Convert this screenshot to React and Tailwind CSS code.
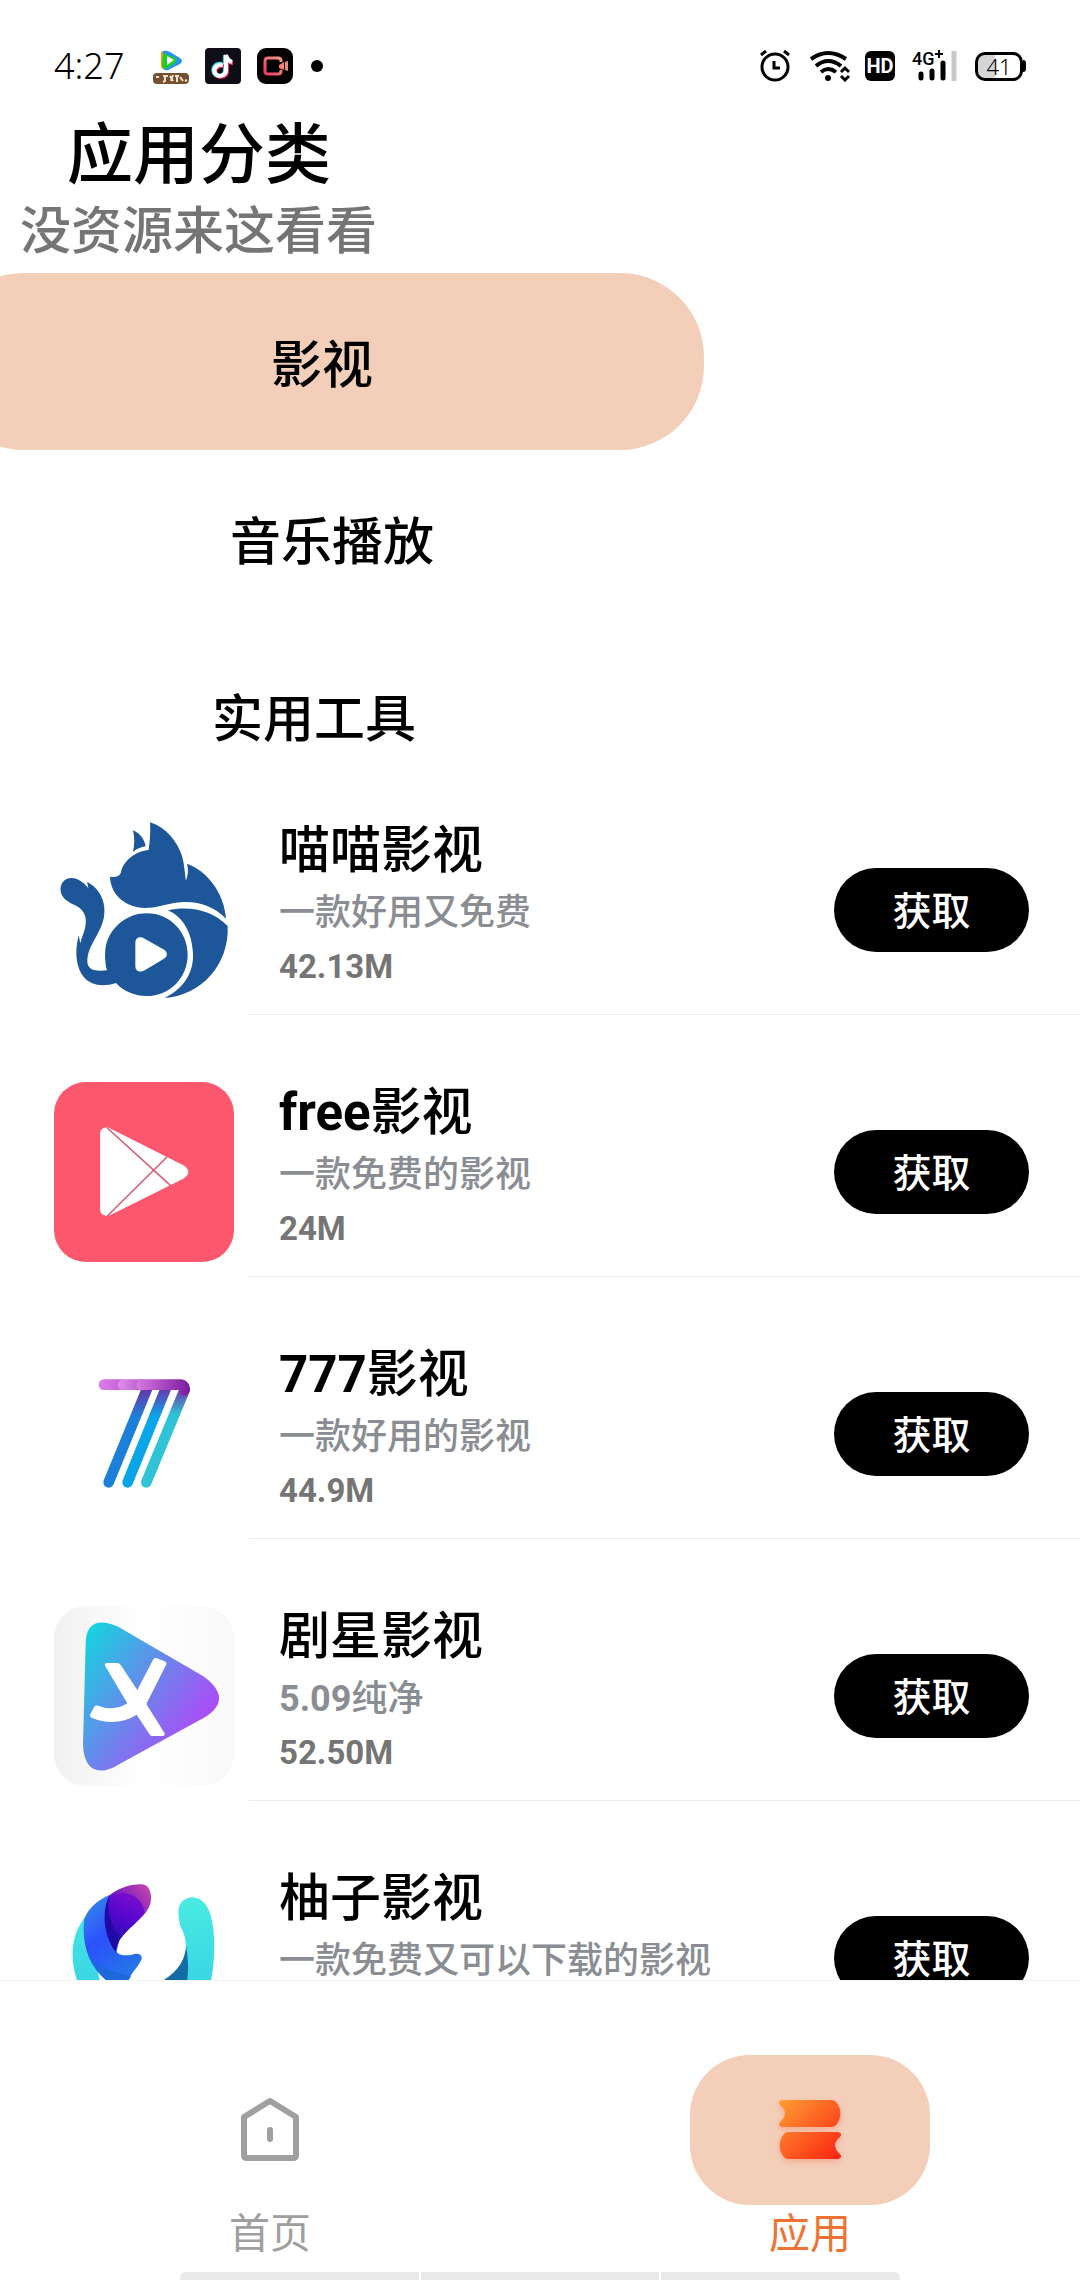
import { useState } from 'react'

const CatIcon = () => (
    <svg viewBox="42 60 540 540" className="size-full" fill="#1d5799">
        <path d="M330 67C378 82 412 124 426 168C434 196 434 220 438 242C444 225 446 208 441 191C500 212 552 276 558 356C520 318 478 304 430 306C384 308 356 324 314 324C258 322 212 286 210 230C226 232 240 230 243 216C250 184 284 154 326 150C330 124 332 96 330 67Z" />
        <path d="M279 91C300 100 314 118 317 139C303 141 290 147 279 156C284 134 284 112 279 91Z" />
        <path d="M384 331C446 316 518 330 563 378C568 492 486 586 374 594C432 566 462 516 459 460C456 402 432 352 384 331Z" />
        <path d="M62 262C66 236 92 228 112 238C126 244 136 254 145 264C144 258 143 252 141 246C176 262 200 304 192 350C184 400 142 436 142 484C142 508 162 516 201 511C194 490 194 452 198 436C212 380 262 340 320 340C390 340 443 396 443 464C443 534 388 588 320 588C284 588 250 574 228 549C160 570 112 540 109 462C109 440 112 424 116 406C118 414 119 422 121 430C128 400 142 382 136 350C128 318 100 318 78 300C66 290 60 278 62 262Z" />
        <path fill="#fff" d="M286 430C286 412 300 408 314 416L370 448C384 456 384 468 372 476L314 511C300 519 286 514 286 498Z" />
    </svg>
)

const FreeIcon = () => (
    <svg viewBox="42 66 540 540" className="size-full bg-[#fd576e]">
        <path fill="#fff" d="M180 225C180 205 192 200 208 204L430 316C450 328 450 344 430 356L210 466C192 470 180 462 180 446Z" />
        <path stroke="#d4607c" strokeWidth="5" fill="none" d="M202 204L392 377M202 468L381 291" />
    </svg>
)

const SevenIcon = () => (
    <svg viewBox="42 13 540 540" className="size-full" fill="none" strokeWidth="32" strokeLinecap="round" strokeLinejoin="round">
        <defs>
            <linearGradient id="barA" gradientUnits="userSpaceOnUse" x1="178" y1="0" x2="250" y2="0">
                <stop offset="0" stopColor="#d97fe8" />
                <stop offset="1" stopColor="#c55fd4" />
            </linearGradient>
            <linearGradient id="barB" gradientUnits="userSpaceOnUse" x1="235" y1="0" x2="310" y2="0">
                <stop offset="0" stopColor="#de90ea" />
                <stop offset="1" stopColor="#b955c8" />
            </linearGradient>
            <linearGradient id="bar" gradientUnits="userSpaceOnUse" x1="290" y1="0" x2="450" y2="0">
                <stop offset="0" stopColor="#d678e0" />
                <stop offset="1" stopColor="#7a1ba0" />
            </linearGradient>
            <linearGradient id="legA" gradientUnits="userSpaceOnUse" x1="0" y1="140" x2="0" y2="230">
                <stop offset="0" stopColor="#6f2da8" />
                <stop offset="1" stopColor="#1d80d8" />
            </linearGradient>
            <linearGradient id="legB" gradientUnits="userSpaceOnUse" x1="0" y1="140" x2="0" y2="230">
                <stop offset="0" stopColor="#6f2da8" />
                <stop offset="1" stopColor="#08a6e8" />
            </linearGradient>
            <linearGradient id="legC" gradientUnits="userSpaceOnUse" x1="0" y1="135" x2="0" y2="225">
                <stop offset="0" stopColor="#7a1ba0" />
                <stop offset="1" stopColor="#30c3d8" />
            </linearGradient>
        </defs>
        <path stroke="url(#legA)" d="M322 145L206 428" />
        <path stroke="url(#legB)" d="M378 145L263 428" />
        <path stroke="url(#legC)" d="M434 150L319 428" />
        <path stroke="none" fill="url(#barA)" d="M192 119H250V151H192A16 16 0 0 1 192 119Z" />
        <path stroke="none" fill="url(#barB)" d="M250 119H310V151H250A16 16 0 0 1 250 119Z" />
        <path stroke="url(#bar)" d="M304 135H420Q436 136 433 152" />
    </svg>
)

const StarIcon = () => (
    <svg viewBox="42 47 540 540" className="size-full bg-linear-to-r from-[#f2f1f0] via-white to-[#f9f9f9]">
        <defs>
            <linearGradient id="play" gradientUnits="userSpaceOnUse" x1="130" y1="150" x2="500" y2="400">
                <stop offset="0" stopColor="#17d2e0" />
                <stop offset="0.55" stopColor="#6f82ec" />
                <stop offset="1" stopColor="#ad4bf7" />
            </linearGradient>
        </defs>
        <path fill="url(#play)" d="M137 160C138 100 172 82 232 108L490 258C552 302 552 346 496 380L240 520C180 558 132 546 129 462Z" />
        <path fill="#fff" d="M195 226Q192 218 202 218H232Q238 218 242 224L292 299L339 208Q343 201 351 204L374 213Q382 217 378 224L319 341L373 427Q377 437 366 437H336Q331 437 328 431L290 373C250 398 204 402 156 383Q148 380 151 372L162 351Q166 343 174 346C206 358 236 356 262 339L195 226Z" />
    </svg>
)

const PomeloIcon = () => (
    <svg viewBox="-18 -4 540 540" className="size-full">
        <defs>
            <linearGradient id="tip" x1="0" y1="1" x2="1" y2="0">
                <stop offset="0.3" stopColor="#5b0bd0" />
                <stop offset="1" stopColor="#cc4aa6" />
            </linearGradient>
            <linearGradient id="wave" x1="0" y1="0" x2="0.6" y2="1">
                <stop offset="0" stopColor="#3393e6" />
                <stop offset="0.5" stopColor="#2d50fb" />
                <stop offset="1" stopColor="#2474ea" />
            </linearGradient>
            <linearGradient id="violet" x1="0.3" y1="1" x2="0.7" y2="0">
                <stop offset="0" stopColor="#3309b8" />
                <stop offset="0.5" stopColor="#5a06cf" />
                <stop offset="1" stopColor="#7a10cc" />
            </linearGradient>
            <linearGradient id="aqua" x1="0" y1="0" x2="0" y2="1">
                <stop offset="0" stopColor="#49eae2" />
                <stop offset="1" stopColor="#2fc9e6" />
            </linearGradient>
        </defs>
        <path fill="url(#aqua)" d="M76 142C30 200 30 270 52 336C90 470 230 540 340 490C440 450 462 340 463 220C460 130 440 86 396 84C340 90 356 150 362 172C390 220 384 290 314 336H120Z" />
        <path fill="#146ca6" d="M378 228C376 280 344 312 312 332L300 350H378C388 312 384 262 378 228Z" />
        <path fill="#fff" d="M170 248L300 90L378 228C374 276 350 306 300 334L200 334Z" />
        <path fill="url(#wave)" d="M150 76C110 92 84 120 73 148C64 220 84 290 140 334H204C216 306 238 290 245 268C247 254 232 250 216 256C196 260 176 258 170 247L180 200Z" />
        <path fill="#1d69dc" d="M90 262C130 312 180 306 213 322L204 334H140C118 314 100 290 90 262Z" />
        <path fill="#1f0aa5" d="M150 76C128 110 124 190 167 248C170 226 180 206 196 190Z" />
        <path fill="url(#tip)" d="M150 76C190 48 230 42 252 46C270 50 276 78 272 98C264 140 212 168 184 205Z" />
        <path fill="url(#violet)" d="M148 80C200 60 244 76 254 128C236 154 206 176 184 204C150 170 140 124 148 80Z" />
    </svg>
)

const apps = [
    { id: 1, name: '喵喵影视', desc: '一款好用又免费', size: '42.13M', Icon: CatIcon },
    { id: 2, latin: 'free', name: '影视', desc: '一款免费的影视', size: '24M', Icon: FreeIcon },
    { id: 3, latin: '777', name: '影视', desc: '一款好用的影视', size: '44.9M', Icon: SevenIcon },
    { id: 4, name: '剧星影视', version: '5.09', desc: '纯净', size: '52.50M', Icon: StarIcon },
    { id: 5, name: '柚子影视', desc: '一款免费又可以下载的影视', size: '', Icon: PomeloIcon },
]

const categories = [
    { name: '影视', width: 'w-[764px]' },
    { name: '音乐播放', width: 'w-[784px]' },
    { name: '实用工具', width: 'w-[748px]' },
]

const StatusBar = () => (
    <div className="flex h-[110px] shrink-0 items-center justify-between px-[54px] pt-[22px]">
        <div className="flex items-center">
            <span className="w-[99px] font-['Noto_Sans'] text-[36px] font-light leading-none">4:27</span>
            <div className="flex items-center gap-4">
                <svg viewBox="0 0 36 36" className="size-9">
                    <path fill="#f59a1d" d="M8 5Q8 3 11 3V21Q8 21 8 18Z" />
                    <path fill="#2492ef" d="M10 3Q13 2 17 4L27 10Q31 13 27 16L15 22Q11 23 10 20Z" />
                    <path fill="#20cf1e" d="M10 5L22 10Q25 13 22 15L12 21Q9 20 9 16Z" />
                    <path fill="#fff" d="M14 8L21 12L14 17Z" />
                    <rect y="25" width="36" height="11" rx="4" fill="#77502f" />
                    <path stroke="#f2e4d2" strokeWidth="2" fill="none" d="M3 29h3M10 28h5M12 27v6l-2 1M17 28l3 5M20 27l-2 6M22 28h4M24 27v7M27 29l3 4M32 33l2-1" />
                </svg>
                <svg viewBox="0 0 36 36" className="size-9">
                    <rect width="36" height="36" rx="4" fill="#0f0d18" />
                    <g fill="none" strokeWidth="4">
                        <path stroke="#31e5e4" d="M17 16C10 15 7 20 9 25C12 30 20 28 20 22V7C21 11 23 13 27 14" />
                        <path stroke="#f3315b" d="M19 18C12 17 9 22 11 26C14 31 22 29 22 23V9C23 13 25 15 28 15" />
                        <path stroke="#fff" d="M18 17C11 16 8 21 10 25C13 30 21 28 21 22V7C22 11 24 13 27 14" />
                    </g>
                </svg>
                <svg viewBox="0 0 36 36" className="size-9">
                    <defs>
                        <linearGradient id="rec" x1="0" y1="1" x2="1" y2="0">
                            <stop offset="0" stopColor="#e63c5d" />
                            <stop offset="1" stopColor="#f49a86" />
                        </linearGradient>
                    </defs>
                    <rect width="36" height="36" rx="9" fill="#050203" />
                    <path fill="none" stroke="url(#rec)" strokeWidth="3" d="M24 14V13Q24 10 21 10H11Q8 10 8 13V23Q8 26 11 26H21Q24 26 24 23V22" />
                    <path fill="#f2866f" d="M22 17L27 14V22L22 20ZM28 14L31 13V23L28 22Z" />
                </svg>
                <span className="ml-0.5 size-3 rounded-full bg-black" />
            </div>
        </div>
        <div className="flex items-center">
            <svg viewBox="0 0 30 32" className="h-8 w-[30px]" fill="none" stroke="#000" strokeWidth="3">
                <circle cx="15" cy="17" r="13" />
                <path d="M14 11V18H20M1 5L6 1M24 1L29 5" />
            </svg>
            <svg viewBox="0 0 40 32" className="ml-5 h-8 w-10" fill="none" stroke="#000" strokeWidth="4">
                <path d="M1 9Q18 -3 36 9M6 16Q18 6 31 16M11 22Q18 16 26 22" />
                <circle cx="18" cy="28" r="3" fill="#000" stroke="none" />
                <path strokeWidth="3" d="M31 22L35 18L39 22M31 26L35 30L39 26" />
            </svg>
            <span className="ml-[15px] flex h-[30px] w-[30px] items-center justify-center rounded-md bg-black font-['Roboto'] text-[20px] font-bold leading-none text-white">HD</span>
            <svg viewBox="0 0 46 32" className="ml-[17px] h-8 w-[46px] overflow-visible">
                <text x="0" y="15" className="font-['Roboto'] text-[18px] font-medium">4G</text>
                <path stroke="#000" strokeWidth="2" d="M23 4H31M27 0V8" />
                <path stroke="#000" strokeWidth="5" strokeLinecap="round" d="M9 24V28M20 21V28M31 13V28" />
                <path stroke="#c9c9c9" strokeWidth="5" d="M42 1V31" />
            </svg>
            <div className="ml-[17px] flex items-center">
                <span className="flex h-[29px] w-[48px] items-center justify-center rounded-[10px] border-3 border-black bg-linear-to-r from-[#d6d6d6] from-40% to-white to-40% font-['Noto_Sans'] text-[22px] font-light leading-none">41</span>
                <span className="h-3 w-[3px] rounded-r-full bg-black" />
            </div>
        </div>
    </div>
)

const AppRow = ({ app }) => {
    const { Icon } = app
    return (
        <li className="flex h-[210px] shrink-0 pl-[54px]">
            <div className="mt-[15px] size-[180px] shrink-0 overflow-hidden rounded-[32px]">
                <Icon />
            </div>
            <div className="ml-[15px] flex flex-1 items-center justify-between border-b border-[#ebebeb] pl-[30px] pr-[51px]">
                <div className="whitespace-nowrap pb-[9px]">
                    <h2 className="text-[51px] font-medium leading-[68px]">
                        {app.latin && <span className="font-bold">{app.latin}</span>}
                        {app.name}
                    </h2>
                    <p className="text-[36px] font-medium leading-[56px] text-[#8a8d91]">
                        {app.version && <span className="font-bold">{app.version}</span>}
                        {app.desc}
                    </p>
                    <p className="h-[52px] text-[33px] font-bold leading-[52px] text-[#757575]">{app.size}</p>
                </div>
                <button className="h-[84px] w-[195px] rounded-full bg-black pt-[6px] text-[39px] font-medium text-white">获取</button>
            </div>
        </li>
    )
}

const App = () => {
    const [category, setCategory] = useState('影视')

    return (
        <div className="flex h-screen flex-col overflow-hidden bg-white font-['Roboto','Noto_Sans_CJK_SC',sans-serif] text-black">
            <StatusBar />

            <header className="shrink-0 pt-1">
                <h1 className="pl-[67px] text-[66px] font-medium leading-[84px]">应用分类</h1>
                <p className="pl-[20px] text-[51px] font-medium leading-[68px] text-[#757575]">没资源来这看看</p>
            </header>

            {/* Categories */}
            <div className="-ml-[60px] mt-[7px] flex shrink-0 flex-col items-start">
                {categories.map(c => (
                    <button
                        key={c.name}
                        onClick={() => setCategory(c.name)}
                        className={`h-[177px] rounded-[84px] pt-[10px] text-[51px] font-medium ${c.width} ${category === c.name ? 'bg-[#f3cfba]' : ''}`}
                    >
                        {c.name}
                    </button>
                ))}
            </div>

            {/* App list */}
            <ul className="flex min-h-0 flex-1 flex-col gap-[52px] overflow-hidden pt-px">
                {apps.map(app => <AppRow key={app.id} app={app} />)}
            </ul>

            <nav className="flex h-[300px] shrink-0 flex-col border-t border-[#f3f3f3] bg-white">
                <div className="grid flex-1 grid-cols-2 pt-[74px]">
                    <a href="#home" className="flex flex-col items-center text-[#9f9f9f]">
                        <span className="flex h-[150px] w-[240px] items-center justify-center">
                            <svg viewBox="0 0 60 64" className="h-16 w-[60px]" fill="none" stroke="#a0a0a0" strokeWidth="6" strokeLinejoin="round" strokeLinecap="round">
                                <path d="M30 3L56 19V57Q56 60 53 60H7Q4 60 4 57V19Z" />
                                <path d="M30 32V41" />
                            </svg>
                        </span>
                        <span className="text-[41px] leading-[58px]">首页</span>
                    </a>
                    <a href="#apps" className="flex flex-col items-center text-[#ee7334]">
                        <span className="flex h-[150px] w-[240px] items-center justify-center rounded-[60px] bg-[#f3cfba]">
                            <svg viewBox="0 0 64 64" className="size-16 drop-shadow-md drop-shadow-[#ff5a3c]/30">
                                <defs>
                                    <linearGradient id="book" gradientUnits="userSpaceOnUse" x1="2" y1="2" x2="60" y2="62">
                                        <stop offset="0" stopColor="#ff9d33" />
                                        <stop offset="1" stopColor="#fb2313" />
                                    </linearGradient>
                                </defs>
                                <path fill="url(#book)" d="M4 2H54Q57 2 59 5Q66 15 59 26Q57 29 54 29H4Q-1 28 2 24Q12 15 2 7Q-1 3 4 2Z" />
                                <path fill="url(#book)" d="M60 34H10Q7 34 5 37Q-2 47 5 58Q7 61 10 61H60Q65 60 62 56Q52 47 62 39Q65 35 60 34Z" />
                            </svg>
                        </span>
                        <span className="text-[41px] leading-[58px]">应用</span>
                    </a>
                </div>
                <div className="mx-auto flex h-2 w-2/3 shrink-0 gap-[2px] overflow-hidden rounded-t-md">
                    <span className="flex-1 bg-[#e9e9e9]" />
                    <span className="flex-1 bg-[#e9e9e9]" />
                    <span className="flex-1 bg-[#e9e9e9]" />
                </div>
            </nav>
        </div>
    )
}

export default App
